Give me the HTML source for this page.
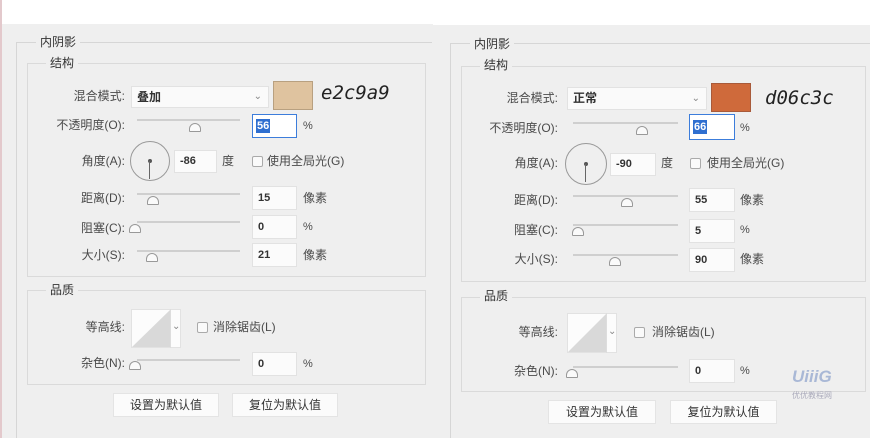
<!DOCTYPE html><html><head><meta charset="utf-8"><style>
body{margin:0;width:870px;height:438px;overflow:hidden;background:#fff;font-family:"Liberation Sans","Noto Sans CJK SC",sans-serif;font-size:12px;color:#4a4a4a;position:relative}
div,span{position:absolute;box-sizing:border-box}
.t{white-space:nowrap;line-height:14px}
.r{text-align:right}
.box{border:1px solid #dadada}
.ln{background:#d6d6d6;height:1px}
.in{background:#fbfbfb;border:1px solid #e2e2e2;padding-left:5px;line-height:22px;font-size:11px;color:#333;font-weight:bold}
.sl{height:2px;background:#cfcfcf}
.cb{width:11px;height:11px;border:1px solid #aaa;background:#fafafa;border-radius:2px}
.btn{background:#fbfbfb;border:1px solid #e4e4e4;text-align:center;line-height:22px;font-size:12px;color:#333}
.hex{font-family:"DejaVu Sans Mono","Liberation Mono",monospace;font-size:19px;color:#222;font-style:italic}
</style></head><body>
<div style="left:0;top:24px;width:870px;height:414px;background:#efefef"></div>
<div style="left:0;top:0;width:2px;height:438px;background:#e3c9cc"></div>
<div style="left:433px;top:0;width:437px;height:25px;background:#fff"></div>

<!-- LEFT -->
<div style="left:16px;top:42px;width:1px;height:396px;background:#d6d6d6"></div>
<div class="ln" style="left:16px;top:42px;width:416px"></div>
<div class="t" style="left:36px;top:35px;background:#efefef;padding:0 4px;color:#333">内阴影</div>
<div class="box" style="left:27px;top:63px;width:399px;height:214px"></div>
<div class="t" style="left:46px;top:56px;background:#efefef;padding:0 4px;color:#333">结构</div>
<div class="t r" style="left:30px;top:89px;width:95px">混合模式:</div>
<div class="in" style="left:131px;top:86px;width:138px;height:22px;background:#fafafa;font-size:12px;line-height:20px">叠加<span style="right:6px;top:0;color:#888;font-size:10px;font-weight:normal">⌄</span></div>
<div style="left:273px;top:81px;width:40px;height:29px;background:#dfc39f;border:1px solid #b8a080"></div>
<div class="t hex" style="left:321px;top:86px">e2c9a9</div>

<div class="t r" style="left:20px;top:118px;width:105px">不透明度(O):</div>
<div class="sl" style="left:137px;top:119px;width:103px"></div>
<div style="left:189px;top:123px;width:12px;height:9px;border:1px solid #999;border-radius:6px 6px 1px 1px;background:#fafafa"></div>
<div class="in" style="left:252px;top:114px;width:45px;height:24px;border:1px solid #3c7ddb;background:#fff"><span style="left:3px;top:4px;background:#2f6fd0;color:#fff;line-height:14px;padding:0 1px">56</span></div>
<div class="t" style="left:303px;top:119px;font-size:11px">%</div>

<div class="t r" style="left:30px;top:154px;width:95px">角度(A):</div>
<div style="left:130px;top:141px;width:40px;height:40px;border:1px solid #999;border-radius:50%"></div>
<div style="left:148px;top:159px;width:4px;height:4px;background:#555;border-radius:50%"></div>
<div style="left:149px;top:161px;width:1px;height:18px;background:#666"></div>
<div class="in" style="left:174px;top:150px;width:43px;height:23px;line-height:21px">-86</div>
<div class="t" style="left:222px;top:154px">度</div>
<div class="cb" style="left:252px;top:156px"></div>
<div class="t" style="left:267px;top:154px">使用全局光(G)</div>

<div class="t r" style="left:30px;top:191px;width:95px">距离(D):</div>
<div class="sl" style="left:137px;top:193px;width:103px"></div>
<div style="left:147px;top:196px;width:12px;height:9px;border:1px solid #999;border-radius:6px 6px 1px 1px;background:#fafafa"></div>
<div class="in" style="left:252px;top:186px;width:45px;height:24px">15</div>
<div class="t" style="left:303px;top:191px">像素</div>

<div class="t r" style="left:30px;top:221px;width:95px">阻塞(C):</div>
<div class="sl" style="left:137px;top:221px;width:103px"></div>
<div style="left:129px;top:224px;width:12px;height:9px;border:1px solid #999;border-radius:6px 6px 1px 1px;background:#fafafa"></div>
<div class="in" style="left:252px;top:215px;width:45px;height:24px">0</div>
<div class="t" style="left:303px;top:220px;font-size:11px">%</div>

<div class="t r" style="left:30px;top:248px;width:95px">大小(S):</div>
<div class="sl" style="left:137px;top:250px;width:103px"></div>
<div style="left:146px;top:253px;width:12px;height:9px;border:1px solid #999;border-radius:6px 6px 1px 1px;background:#fafafa"></div>
<div class="in" style="left:252px;top:243px;width:45px;height:24px">21</div>
<div class="t" style="left:303px;top:248px">像素</div>

<div class="box" style="left:27px;top:290px;width:399px;height:95px"></div>
<div class="t" style="left:46px;top:283px;background:#efefef;padding:0 4px;color:#333">品质</div>
<div class="t r" style="left:30px;top:320px;width:95px">等高线:</div>
<div style="left:131px;top:309px;width:50px;height:39px;background:#fcfcfc;border:1px solid #e2e2e2"></div>
<svg style="position:absolute;left:132px;top:310px" width="38" height="37"><polygon points="0,37 38,0 38,37" fill="#d9d9d9"/></svg>
<div style="left:170px;top:309px;width:1px;height:39px;background:#ddd"></div>
<div class="t" style="left:172px;top:320px;font-size:10px;color:#888">⌄</div>
<div class="cb" style="left:197px;top:322px"></div>
<div class="t" style="left:213px;top:320px">消除锯齿(L)</div>
<div class="t r" style="left:30px;top:356px;width:95px">杂色(N):</div>
<div class="sl" style="left:137px;top:359px;width:103px"></div>
<div style="left:129px;top:361px;width:12px;height:9px;border:1px solid #999;border-radius:6px 6px 1px 1px;background:#fafafa"></div>
<div class="in" style="left:252px;top:352px;width:45px;height:24px">0</div>
<div class="t" style="left:303px;top:357px;font-size:11px">%</div>
<div class="btn" style="left:113px;top:393px;width:106px;height:24px">设置为默认值</div>
<div class="btn" style="left:232px;top:393px;width:106px;height:24px">复位为默认值</div>

<!-- RIGHT -->
<div style="left:450px;top:43px;width:1px;height:395px;background:#d6d6d6"></div>
<div class="ln" style="left:450px;top:43px;width:420px"></div>
<div class="t" style="left:470px;top:37px;background:#efefef;padding:0 4px;color:#333">内阴影</div>
<div class="box" style="left:461px;top:66px;width:405px;height:216px"></div>
<div class="t" style="left:480px;top:58px;background:#efefef;padding:0 4px;color:#333">结构</div>
<div class="t r" style="left:462px;top:91px;width:96px">混合模式:</div>
<div class="in" style="left:567px;top:87px;width:140px;height:23px;background:#fafafa;font-size:12px;line-height:21px">正常<span style="right:6px;top:0;color:#888;font-size:10px;font-weight:normal">⌄</span></div>
<div style="left:711px;top:83px;width:40px;height:29px;background:#cf6a3b;border:1px solid #a85a3a"></div>
<div class="t hex" style="left:765px;top:91px">d06c3c</div>

<div class="t r" style="left:452px;top:121px;width:106px">不透明度(O):</div>
<div class="sl" style="left:573px;top:122px;width:105px"></div>
<div style="left:636px;top:126px;width:12px;height:9px;border:1px solid #999;border-radius:6px 6px 1px 1px;background:#fafafa"></div>
<div class="in" style="left:689px;top:114px;width:46px;height:26px;border:1px solid #3c7ddb;background:#fff"><span style="left:3px;top:5px;background:#2f6fd0;color:#fff;line-height:14px;padding:0 1px">66</span></div>
<div class="t" style="left:740px;top:121px;font-size:11px">%</div>

<div class="t r" style="left:462px;top:156px;width:96px">角度(A):</div>
<div style="left:565px;top:143px;width:42px;height:42px;border:1px solid #999;border-radius:50%"></div>
<div style="left:584px;top:162px;width:4px;height:4px;background:#555;border-radius:50%"></div>
<div style="left:585px;top:164px;width:1px;height:18px;background:#666"></div>
<div class="in" style="left:610px;top:153px;width:46px;height:23px;line-height:21px">-90</div>
<div class="t" style="left:661px;top:156px">度</div>
<div class="cb" style="left:690px;top:158px"></div>
<div class="t" style="left:707px;top:156px">使用全局光(G)</div>

<div class="t r" style="left:462px;top:193px;width:96px">距离(D):</div>
<div class="sl" style="left:573px;top:195px;width:105px"></div>
<div style="left:621px;top:198px;width:12px;height:9px;border:1px solid #999;border-radius:6px 6px 1px 1px;background:#fafafa"></div>
<div class="in" style="left:689px;top:188px;width:46px;height:24px">55</div>
<div class="t" style="left:740px;top:193px">像素</div>

<div class="t r" style="left:462px;top:223px;width:96px">阻塞(C):</div>
<div class="sl" style="left:573px;top:224px;width:105px"></div>
<div style="left:572px;top:227px;width:12px;height:9px;border:1px solid #999;border-radius:6px 6px 1px 1px;background:#fafafa"></div>
<div class="in" style="left:689px;top:219px;width:46px;height:24px">5</div>
<div class="t" style="left:740px;top:223px;font-size:11px">%</div>

<div class="t r" style="left:462px;top:252px;width:96px">大小(S):</div>
<div class="sl" style="left:573px;top:254px;width:105px"></div>
<div style="left:609px;top:257px;width:12px;height:9px;border:1px solid #999;border-radius:6px 6px 1px 1px;background:#fafafa"></div>
<div class="in" style="left:689px;top:248px;width:46px;height:24px">90</div>
<div class="t" style="left:740px;top:252px">像素</div>

<div class="box" style="left:461px;top:297px;width:405px;height:95px"></div>
<div class="t" style="left:480px;top:289px;background:#efefef;padding:0 4px;color:#333">品质</div>
<div class="t r" style="left:462px;top:325px;width:96px">等高线:</div>
<div style="left:567px;top:313px;width:50px;height:40px;background:#fcfcfc;border:1px solid #e2e2e2"></div>
<svg style="position:absolute;left:568px;top:314px" width="38" height="38"><polygon points="0,38 38,0 38,38" fill="#d9d9d9"/></svg>
<div style="left:606px;top:313px;width:1px;height:40px;background:#ddd"></div>
<div class="t" style="left:608px;top:325px;font-size:10px;color:#888">⌄</div>
<div class="cb" style="left:634px;top:327px"></div>
<div class="t" style="left:652px;top:325px">消除锯齿(L)</div>
<div class="t r" style="left:462px;top:364px;width:96px">杂色(N):</div>
<div class="sl" style="left:573px;top:366px;width:105px"></div>
<div style="left:566px;top:369px;width:12px;height:9px;border:1px solid #999;border-radius:6px 6px 1px 1px;background:#fafafa"></div>
<div class="in" style="left:689px;top:359px;width:46px;height:24px">0</div>
<div class="t" style="left:740px;top:364px;font-size:11px">%</div>
<div class="t" style="left:792px;top:370px;font-size:17px;font-weight:bold;font-style:italic;color:#a9b8d6">UiiiG</div>
<div class="t" style="left:792px;top:389px;font-size:8px;color:#aab">优优教程网</div>
<div class="btn" style="left:548px;top:400px;width:108px;height:24px">设置为默认值</div>
<div class="btn" style="left:670px;top:400px;width:107px;height:24px">复位为默认值</div>
</body></html>
